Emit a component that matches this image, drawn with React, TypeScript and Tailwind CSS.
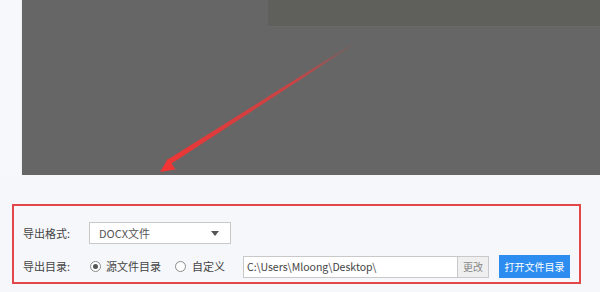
const font = { fontFamily: '"Noto Sans CJK SC", "Noto Sans", sans-serif' };

const Radio = ({ checked }: { checked?: boolean }) => (
  <span className="flex h-[11px] w-[11px] items-center justify-center rounded-full border border-[#8a8a8a] bg-white">
    {checked && <span className="h-[5px] w-[5px] rounded-full bg-[#555]" />}
  </span>
);

export default function App() {
  return (
    <div className="flex h-[292px] w-[600px] flex-col overflow-hidden bg-[#f5f7fa] text-[#444]" style={font}>
      <div className="flex h-[175px]">
        <div className="w-[22px] border-r border-[#eef0f3] bg-[#f6f8fb]" />
        <div className="relative flex-1 bg-[#666666]">
          <div className="ml-[246px] h-[27px] border-b border-[#6a6a6a] bg-[#5f5f5c]" />
          {/* annotation arrow */}
          <svg className="absolute left-0 top-0" width="578" height="175" viewBox="0 0 578 175">
            <defs>
              <linearGradient id="ar" x1="333" y1="42" x2="140" y2="172" gradientUnits="userSpaceOnUse">
                <stop offset="0" stopColor="#e8393a" stopOpacity="0" />
                <stop offset="0.3" stopColor="#e8393a" stopOpacity="0.75" />
                <stop offset="1" stopColor="#ef3535" />
              </linearGradient>
            </defs>
            <polygon points="333,42 334,43.2 148,164.5 145,160" fill="url(#ar)" />
            <polygon points="138,172 146,158.5 150,164 153.5,169.5" fill="#ef3535" />
          </svg>
        </div>
      </div>

      <div className="ml-[12px] mt-[29px] h-[80px] w-[569px] border-2 border-[#e2474a] px-[9px] pt-[16px] text-[11px]">
        <div className="flex h-[22px] items-center">
          <span className="w-[66px]">导出格式:</span>
          <div className="flex h-[22px] w-[142px] items-center justify-between border border-[#c9c9c9] bg-white pl-[9px] pr-[11px] text-[#555]">
            <span>DOCX文件</span>
            <span className="h-0 w-0 border-x-[4px] border-t-[5px] border-x-transparent border-t-[#555]" />
          </div>
        </div>

        <div className="mt-[11px] flex h-[23px] items-center">
          <span className="w-[67px]">导出目录:</span>
          <Radio checked />
          <span className="ml-[5px]">源文件目录</span>
          <span className="ml-[14px]">
            <Radio />
          </span>
          <span className="ml-[6px]">自定义</span>
          <div className="ml-[18px] flex h-[22px] w-[246px] items-stretch border border-[#c9c9c9] bg-white">
            <span className="flex flex-1 items-center pl-[3px] text-[10.5px] text-[#444]">C:\Users\Mloong\Desktop\</span>
            <span className="flex w-[31px] items-center justify-center border-l border-[#c9c9c9] bg-[#efefef] text-[10px] text-[#888]">
              更改
            </span>
          </div>
          <button className="ml-[10px] flex h-[23px] w-[71px] items-center justify-center bg-[#2d8cf0] text-[10px] text-white">
            打开文件目录
          </button>
        </div>
      </div>
    </div>
  );
}
